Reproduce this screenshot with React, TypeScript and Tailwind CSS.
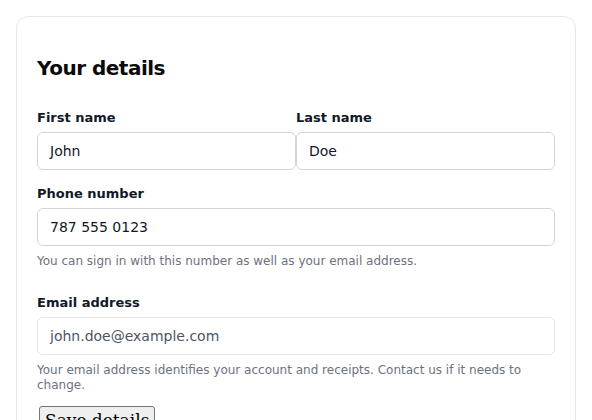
import React from "react";

function Label({ children }: { children: React.ReactNode }) {
  return (
    <label className="block pt-[1px] text-[13px] leading-[20px] font-bold text-[#111827] mb-[4px]">
      {children}
    </label>
  );
}

function Input({ value, muted }: { value: string; muted?: boolean }) {
  return (
    <div
      className={
        "h-[38px] flex items-center px-[12px] rounded-[6px] bg-white border text-[14px] " +
        (muted ? "border-[#e5e7eb] text-[#4b5563]" : "border-[#d1d5db] text-[#111827]")
      }
    >
      {value}
    </div>
  );
}

export default function App() {
  return (
    <div
      className="bg-white min-h-[420px] p-4"
      style={{ fontFamily: '"DejaVu Sans", sans-serif' }}
    >
      <div className="rounded-xl border border-[#e5e7eb] px-5 pt-9 pb-6">
        <h2 className="text-[20px] leading-[28px] font-bold tracking-tight text-[#0a0a0a] mt-[1px]">Your details</h2>
        <div className="grid grid-cols-2 mt-[25px]">
          <div>
            <Label>First name</Label>
            <Input value="John" />
          </div>
          <div>
            <Label>Last name</Label>
            <Input value="Doe" />
          </div>
        </div>
        <div className="mt-[13px]">
          <Label>Phone number</Label>
          <Input value="787 555 0123" />
          <p className="mt-2 text-[12px] leading-[15px] text-[#6b7280]">
            You can sign in with this number as well as your email address.
          </p>
        </div>
        <div className="mt-[23px]">
          <Label>Email address</Label>
          <Input value="john.doe@example.com" muted />
          <p className="mt-2 text-[12px] leading-[15px] text-[#6b7280]">
            Your email address identifies your account and receipts. Contact us if it needs to change.
          </p>
        </div>
        <button
          className="mt-[13px] ml-[2px] border border-[#767676] rounded-[3px] bg-[#efefef] px-[5px] pt-[3px] pb-[2px] text-[17px] leading-[20px] text-black"
          style={{ fontFamily: '"DejaVu Serif", serif' }}
        >
          Save details
        </button>
      </div>
    </div>
  );
}
